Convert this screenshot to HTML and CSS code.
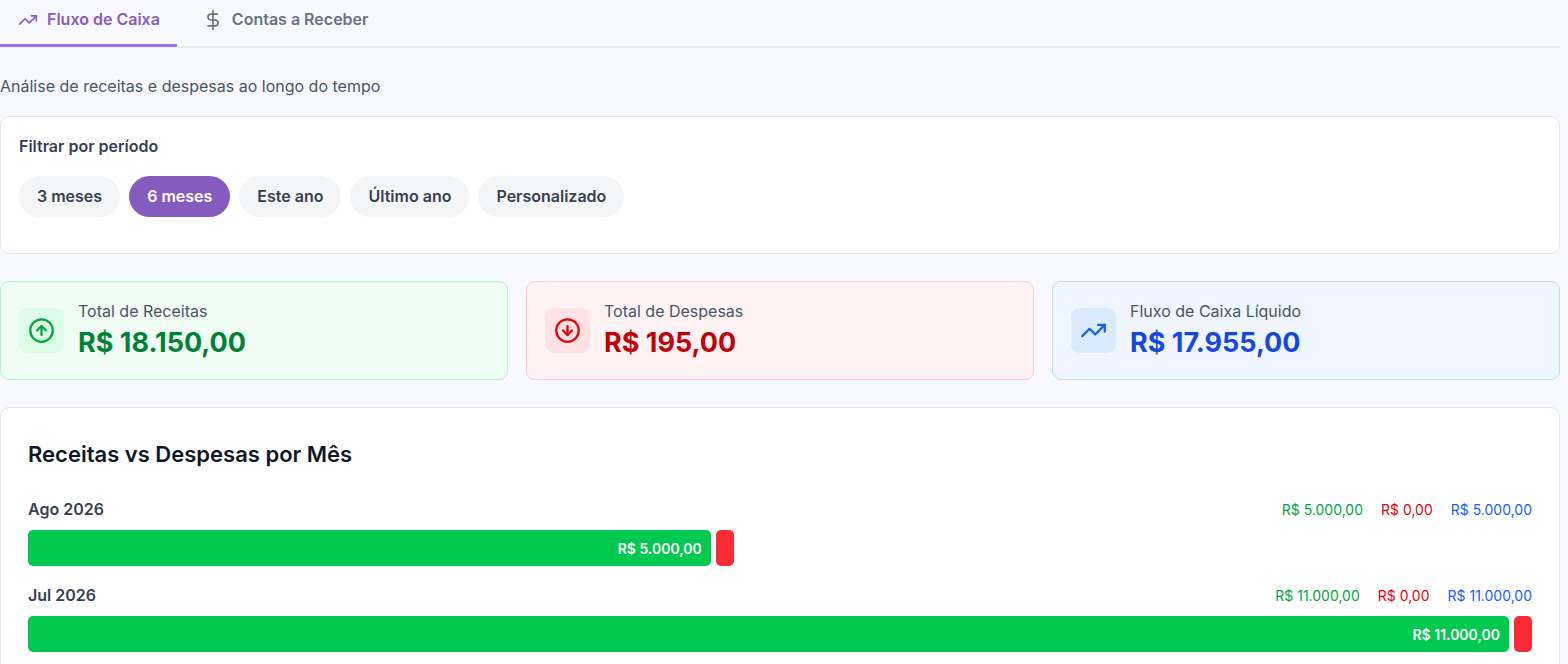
FILE: index.html
```html
<!DOCTYPE html>
<html lang="pt-BR">
  <head>
    <meta charset="UTF-8" />
    <title>Fluxo de Caixa</title>
    <link rel="stylesheet" href="styles.css">
  </head>
  <body>
    <nav class="tabs">
      <button type="button" class="tab active">
        <svg class="tab-icon" viewBox="0 0 24 24">
          <path d="M16 7h6v6" />
          <path d="m22 7-8.5 8.5-5-5L2 17" />
        </svg>
        Fluxo de Caixa
      </button>
      <button type="button" class="tab">
        <svg class="tab-icon" viewBox="0 0 24 24">
          <path d="M12 1v22" />
          <path d="M17 5H9.5a3.5 3.5 0 0 0 0 7h5a3.5 3.5 0 0 1 0 7H6" />
        </svg>
        Contas a Receber
      </button>
    </nav>

    <main class="content">
      <p class="subtitle">Análise de receitas e despesas ao longo do tempo</p>

      <section class="card filter">
        <h2 class="filter-title">Filtrar por período</h2>
        <div class="filter-options">
          <button type="button" class="pill">3 meses</button>
          <button type="button" class="pill selected">6 meses</button>
          <button type="button" class="pill">Este ano</button>
          <button type="button" class="pill">Último ano</button>
          <button type="button" class="pill">Personalizado</button>
        </div>
      </section>

      <section class="summary">
        <div class="stat income">
          <div class="stat-icon">
            <svg viewBox="0 0 24 24">
              <circle cx="12" cy="12" r="10" />
              <path d="m16 12-4-4-4 4" />
              <path d="M12 16V8" />
            </svg>
          </div>
          <div>
            <p class="stat-label">Total de Receitas</p>
            <p class="stat-value">R$ 18.150,00</p>
          </div>
        </div>
        <div class="stat expense">
          <div class="stat-icon">
            <svg viewBox="0 0 24 24">
              <circle cx="12" cy="12" r="10" />
              <path d="M12 8v8" />
              <path d="m8 12 4 4 4-4" />
            </svg>
          </div>
          <div>
            <p class="stat-label">Total de Despesas</p>
            <p class="stat-value">R$ 195,00</p>
          </div>
        </div>
        <div class="stat net">
          <div class="stat-icon">
            <svg viewBox="0 0 24 24">
              <path d="M16 7h6v6" />
              <path d="m22 7-8.5 8.5-5-5L2 17" />
            </svg>
          </div>
          <div>
            <p class="stat-label">Fluxo de Caixa Líquido</p>
            <p class="stat-value">R$ 17.955,00</p>
          </div>
        </div>
      </section>

      <section class="card chart">
        <h2 class="chart-title">Receitas vs Despesas por Mês</h2>
        <div class="months">
          <div class="month">
            <div class="month-header">
              <h3 class="month-name">Ago 2026</h3>
              <div class="month-values">
                <span class="value-income">R$ 5.000,00</span>
                <span class="value-expense">R$ 0,00</span>
                <span class="value-net">R$ 5.000,00</span>
              </div>
            </div>
            <div class="bars">
              <div class="bar bar-income" style="width: 45.4%">R$ 5.000,00</div>
              <div class="bar bar-expense" style="width: 0%"></div>
            </div>
          </div>
          <div class="month">
            <div class="month-header">
              <h3 class="month-name">Jul 2026</h3>
              <div class="month-values">
                <span class="value-income">R$ 11.000,00</span>
                <span class="value-expense">R$ 0,00</span>
                <span class="value-net">R$ 11.000,00</span>
              </div>
            </div>
            <div class="bars">
              <div class="bar bar-income" style="width: 100%">R$ 11.000,00</div>
              <div class="bar bar-expense" style="width: 0%"></div>
            </div>
          </div>
        </div>
      </section>
    </main>
  </body>
</html>
```

FILE: styles.css
```css
* {
  box-sizing: border-box;
}
body {
  margin: 0;
  padding-right: 8px;
  background-color: #f8f9ff;
  color: #364153;
  font-family: Inter, sans-serif;
  font-size: 16px;
  line-height: 23px;
}
h2,
h3,
p {
  margin: 0;
}
button {
  border: none;
  font: inherit;
  cursor: pointer;
}
svg {
  fill: none;
  stroke: currentColor;
  stroke-width: 2;
  stroke-linecap: round;
  stroke-linejoin: round;
}

.tabs {
  display: flex;
  gap: 8px;
  border-bottom: 2px solid #e9eaf0;
}
.tab {
  display: flex;
  align-items: center;
  gap: 9px;
  margin-bottom: -1px;
  padding: 8px 17px 13px 18px;
  border-bottom: 3px solid transparent;
  background: none;
  color: #6a7282;
  font-weight: 600;
}
.tab.active {
  border-bottom-color: #9f6fdc;
  color: #855bc0;
}
.tab-icon {
  width: 20px;
  height: 20px;
}

.content {
  display: flex;
  flex-direction: column;
  gap: 27px;
  padding-top: 27px;
}
.subtitle {
  margin-bottom: -9px;
  color: #4a5565;
}

.card {
  border: 1px solid #e5e7eb;
  border-radius: 9px;
  background-color: #ffffff;
}
.filter {
  padding: 18px 18px 36px;
}
.filter-title {
  margin-bottom: 18px;
  font-size: 16px;
  font-weight: 600;
}
.filter-options {
  display: flex;
  flex-wrap: wrap;
  gap: 9px;
}
.pill {
  padding: 9px 18px;
  border-radius: 21px;
  background-color: #f3f5f7;
  color: #364153;
  font-weight: 600;
}
.pill.selected {
  background-color: #855bc0;
  color: #ffffff;
}

.summary {
  display: grid;
  grid-template-columns: repeat(3, 1fr);
  gap: 18px;
}
.stat {
  display: flex;
  align-items: center;
  gap: 14px;
  padding: 18px;
  border: 1px solid;
  border-radius: 9px;
}
.stat-icon {
  display: flex;
  padding: 9px;
  border-radius: 9px;
}
.stat-icon svg {
  width: 27px;
  height: 27px;
}
.stat-label {
  margin-bottom: 2px;
  color: #4a5565;
}
.stat-value {
  font-size: 27px;
  font-weight: 700;
  line-height: 36px;
}
.income {
  border-color: #b9f0cd;
  background-color: #f0fdf4;
  color: #008236;
}
.income .stat-icon {
  background-color: #dcfce7;
  color: #00a63e;
}
.expense {
  border-color: #ffc9cf;
  background-color: #fef2f4;
  color: #c10007;
}
.expense .stat-icon {
  background-color: #ffe2e2;
  color: #e7000b;
}
.net {
  border-color: #bedbf6;
  background-color: #eff6ff;
  color: #1447e6;
}
.net .stat-icon {
  background-color: #dbeafe;
  color: #155dfc;
}

.chart {
  padding: 27px;
}
.chart-title {
  margin-bottom: 25px;
  color: #101828;
  font-size: 22px;
  font-weight: 600;
  line-height: 38px;
}
.months {
  display: flex;
  flex-direction: column;
  gap: 18px;
}
.month-header {
  display: flex;
  justify-content: space-between;
  align-items: center;
  margin-bottom: 9px;
}
.month-name {
  font-size: 16px;
  font-weight: 600;
}
.month-values {
  display: flex;
  gap: 18px;
  font-size: 14px;
}
.value-income {
  color: #00a63e;
}
.value-expense {
  color: #e7000b;
}
.value-net {
  color: #155dfc;
}
.bars {
  display: flex;
  gap: 5px;
  height: 36px;
}
.bar {
  display: flex;
  align-items: center;
  justify-content: flex-end;
  padding: 0 9px;
  border-radius: 5px;
  color: #ffffff;
  font-size: 14px;
  font-weight: 600;
}
.bar-income {
  background-color: #00c950;
}
.bar-expense {
  flex-shrink: 0;
  background-color: #fb2c36;
}
```
